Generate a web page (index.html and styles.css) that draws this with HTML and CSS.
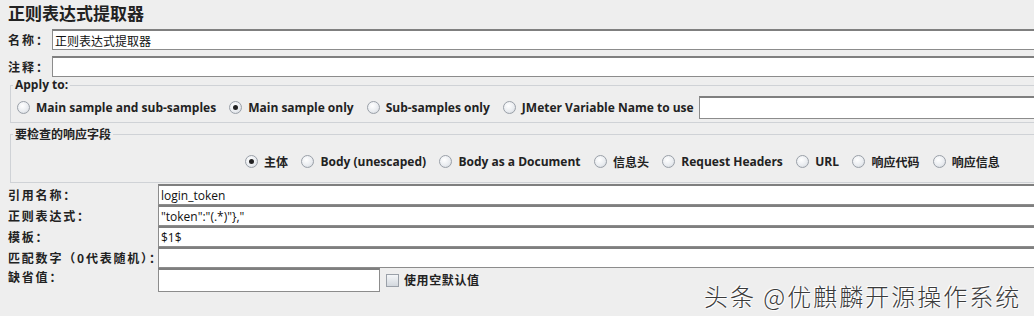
FILE: index.html
```html
<!DOCTYPE html>
<html lang="zh">
<head>
<meta charset="utf-8">
<link rel="stylesheet" href="styles.css">
</head>
<body>
<div class="panel">
  <h1 class="title">正则表达式提取器</h1>
  <div class="row top-row first">
    <label class="lbl">名称：</label>
    <div class="field"><span class="val cjk">正则表达式提取器</span></div>
  </div>
  <div class="row top-row">
    <label class="lbl">注释：</label>
    <div class="field"></div>
  </div>

  <fieldset class="group apply">
    <legend>Apply to:</legend>
    <div class="radios">
      <span class="opt"><span class="radio"></span>Main sample and sub-samples</span>
      <span class="opt"><span class="radio on"></span>Main sample only</span>
      <span class="opt"><span class="radio"></span>Sub-samples only</span>
      <span class="opt"><span class="radio"></span>JMeter Variable Name to use</span>
      <div class="field var"></div>
    </div>
  </fieldset>

  <fieldset class="group check">
    <legend class="cjk">要检查的响应字段</legend>
    <div class="radios fields">
      <span class="opt"><span class="radio on"></span><span class="cjk">主体</span></span>
      <span class="opt"><span class="radio"></span>Body (unescaped)</span>
      <span class="opt"><span class="radio"></span>Body as a Document</span>
      <span class="opt"><span class="radio"></span><span class="cjk">信息头</span></span>
      <span class="opt"><span class="radio"></span>Request Headers</span>
      <span class="opt"><span class="radio"></span>URL</span>
      <span class="opt"><span class="radio"></span><span class="cjk">响应代码</span></span>
      <span class="opt"><span class="radio"></span><span class="cjk">响应信息</span></span>
    </div>
  </fieldset>

  <div class="form">
    <label class="lbl2">引用名称：</label>
    <div class="field f2"><span class="val">login_token</span></div>
    <label class="lbl2">正则表达式：</label>
    <div class="field f2"><span class="val">"token":"(.*)"},"</span></div>
    <label class="lbl2">模板：</label>
    <div class="field f2"><span class="val">$1$</span></div>
    <label class="lbl2">匹配数字（0代表随机）：</label>
    <div class="field f2"></div>
    <label class="lbl2 lastlbl">缺省值：</label>
    <div class="last">
      <div class="field f2 short"></div>
      <span class="cb"></span>
      <span class="cbtext">使用空默认值</span>
    </div>
  </div>
</div>
<div class="watermark">头条 @优麒麟开源操作系统</div>
</body>
</html>
```
FILE: styles.css
```css
html, body {
  margin: 0;
  padding: 0;
  background: #eeeeee;
  overflow: hidden;
  width: 1034px;
  height: 316px;
}
body {
  font-family: "Open Sans", "Noto Sans CJK SC", sans-serif;
  color: #222;
  position: relative;
}
.cjk {
  font-family: "Noto Sans CJK SC", sans-serif;
}
.panel {
  width: 1060px;
  padding: 0 0 0 8px;
}
.title {
  margin: 0;
  padding-top: 2px;
  height: 27px;
  font-family: "Noto Sans CJK SC", sans-serif;
  font-weight: 700;
  font-size: 17px;
  line-height: 21px;
  color: #222;
}
.row {
  display: flex;
  align-items: center;
}
.top-row {
  height: 21px;
}
.top-row.first {
  margin-bottom: 6px;
}
.lbl {
  width: 44px;
  font-family: "Noto Sans CJK SC", sans-serif;
  font-weight: 700;
  font-size: 12px;
  letter-spacing: 2px;
}
.field {
  background: #fff;
  border: 1px solid #8c8c8c;
  border-top: 2px solid #7f7f7f;
  box-sizing: border-box;
  height: 21px;
  display: flex;
  align-items: center;
  flex: 1;
}
.val {
  font-size: 12px;
  padding-left: 2px;
  color: #111;
}
.group {
  margin: 0 0 0 2px;
  border: 1px solid #cfd2d6;
  border-right: none;
  padding: 0;
}
.group legend {
  font-weight: 700;
  font-size: 12px;
  padding: 0 2px;
  margin-left: 2px;
  line-height: 14px;
  height: 14px;
}
.apply {
  margin-top: 1px;
}
.radios {
  display: flex;
  align-items: center;
  padding-left: 6px;
  height: 30px;
}
.opt {
  display: inline-flex;
  align-items: center;
  font-size: 12px;
  font-weight: 700;
  margin-right: 13px;
  color: #222;
}
.radio {
  width: 11px;
  height: 11px;
  border-radius: 50%;
  border: 1px solid #9aa0a8;
  background: radial-gradient(circle at 40% 35%, #ffffff 0%, #e8ebef 60%, #c8ccd2 100%);
  margin-right: 6px;
  position: relative;
  box-sizing: content-box;
}
.radio.on::after {
  content: "";
  position: absolute;
  left: 3px;
  top: 3px;
  width: 5px;
  height: 5px;
  border-radius: 50%;
  background: #222;
}
.var {
  flex: 0 0 340px;
  height: 23px;
  margin-left: -8px;
}
.check {
  margin-top: 4px;
}
.fields {
  padding-left: 234px;
  height: 41px;
}
.fields .opt { margin-right: 13.4px; }
.form {
  display: grid;
  grid-template-columns: 150px 1fr;
  grid-template-rows: 21px 21px 21px 21px 24px;
  margin-top: 1px;
  align-items: center;
}
.lbl2 {
  font-family: "Noto Sans CJK SC", sans-serif;
  font-weight: 700;
  font-size: 12px;
  letter-spacing: 1.8px;
  white-space: nowrap;
}
.lastlbl {
  align-self: start;
  line-height: 18px;
}
.f2 {
  height: 21px;
  align-self: stretch;
}
.last {
  display: flex;
  align-items: flex-start;
  height: 24px;
}
.short {
  flex: 0 0 222px;
  height: 24px;
}
.cb {
  width: 11px;
  height: 11px;
  border: 1px solid #9aa0a8;
  background: linear-gradient(#f4f6f8, #d3d8de);
  margin: 6px 5px 0 6px;
}
.cbtext {
  font-family: "Noto Sans CJK SC", sans-serif;
  font-weight: 700;
  font-size: 12px;
  margin-top: 3px;
  letter-spacing: 0.6px;
}
.watermark {
  position: absolute;
  left: 704px;
  top: 278px;
  font-family: "Noto Sans CJK SC", sans-serif;
  font-size: 24px;
  font-weight: 300;
  color: #3a3a3a;
  letter-spacing: 2px;
  text-shadow: 0 0 2px #fff, 1px 1px 1px #fff, -1px -1px 1px #fff;
  white-space: nowrap;
}
```
